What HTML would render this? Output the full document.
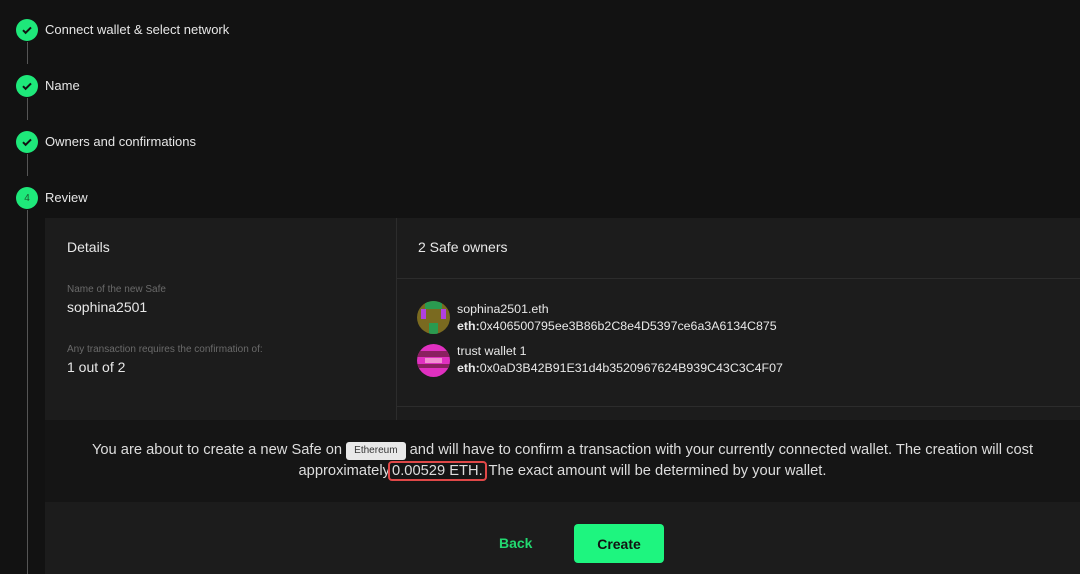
<!DOCTYPE html>
<html><head><style>
*{margin:0;padding:0;box-sizing:border-box}
body{width:1080px;height:574px;background:#121212;font-family:"Liberation Sans",sans-serif;color:#e8e8e8;position:relative;overflow:hidden}
.a{position:absolute}
.c{position:absolute;left:16px;width:22px;height:22px;border-radius:50%;background:#1ee87a;display:flex;align-items:center;justify-content:center}
.l{position:absolute;left:27px;width:1px;background:#555}
.st{position:absolute;left:45px;font-size:13px;color:#e6e6e6}
.sm{font-size:10px;color:#6a6a6a}
.av{position:absolute;left:417px;width:33px;height:33px;border-radius:50%;overflow:hidden}
.ow{font-size:12.4px}
</style></head><body>
<div class="l" style="top:42px;height:22px"></div>
<div class="l" style="top:98px;height:22px"></div>
<div class="l" style="top:154px;height:22px"></div>
<div class="l" style="top:210px;height:364px"></div>
<div class="c" style="top:19px"><svg width="12" height="12" viewBox="0 0 12 12"><path d="M2 6.2l2.6 2.6L10 3.4" stroke="#121212" stroke-width="2" fill="none"/></svg></div>
<div class="c" style="top:75px"><svg width="12" height="12" viewBox="0 0 12 12"><path d="M2 6.2l2.6 2.6L10 3.4" stroke="#121212" stroke-width="2" fill="none"/></svg></div>
<div class="c" style="top:131px"><svg width="12" height="12" viewBox="0 0 12 12"><path d="M2 6.2l2.6 2.6L10 3.4" stroke="#121212" stroke-width="2" fill="none"/></svg></div>
<div class="c" style="top:187px;font-size:10px;color:#1a5a30">4</div>
<div class="st" style="top:22px">Connect wallet &amp; select network</div>
<div class="st" style="top:78px">Name</div>
<div class="st" style="top:134px">Owners and confirmations</div>
<div class="st" style="top:190px">Review</div>

<div class="a" style="left:45px;top:218px;width:1035px;height:202px;background:#1c1c1c"></div>
<div class="a" style="left:396px;top:218px;width:1px;height:202px;background:#2c2c2c"></div>
<div class="a" style="left:397px;top:278px;width:683px;height:1px;background:#2c2c2c"></div>
<div class="a" style="left:397px;top:406px;width:683px;height:1px;background:#2c2c2c"></div>
<div class="a" style="left:67px;top:239px;font-size:14px">Details</div>
<div class="a sm" style="left:67px;top:284px">Name of the new Safe</div>
<div class="a" style="left:67px;top:299px;font-size:14px">sophina2501</div>
<div class="a sm" style="left:67px;top:344px">Any transaction requires the confirmation of:</div>
<div class="a" style="left:67px;top:359px;font-size:14px">1 out of 2</div>
<div class="a" style="left:418px;top:239px;font-size:14px">2 Safe owners</div>
<div class="av" style="top:301px;background:#7a6a20"><div class="a" style="left:8px;top:0;width:17px;height:8px;background:#2a9a50"></div><div class="a" style="left:4px;top:8px;width:5px;height:10px;background:#b040e0"></div><div class="a" style="left:24px;top:8px;width:5px;height:10px;background:#b040e0"></div><div class="a" style="left:12px;top:22px;width:9px;height:11px;background:#2a9a50"></div></div>
<div class="av" style="top:344px;background:#e030c0"><div class="a" style="left:0;top:7px;width:33px;height:6px;background:#8a2060"></div><div class="a" style="left:0;top:20px;width:33px;height:4px;background:#8a2060"></div><div class="a" style="left:8px;top:14px;width:17px;height:5px;background:#f090d0"></div></div>
<div class="a ow" style="left:457px;top:302px">sophina2501.eth</div>
<div class="a ow" style="left:457px;top:319px"><b>eth:</b>0x406500795ee3B86b2C8e4D5397ce6a3A6134C875</div>
<div class="a ow" style="left:457px;top:344px">trust wallet 1</div>
<div class="a ow" style="left:457px;top:361px"><b>eth:</b>0x0aD3B42B91E31d4b3520967624B939C43C3C4F07</div>

<div class="a" style="left:45px;top:420px;width:1035px;height:82px;background:#151515"></div>
<div class="a" style="left:45px;top:440px;width:1035px;text-align:center;font-size:14.7px;line-height:21px;color:#ddd">You are about to create a new Safe on <span style="display:inline-block;background:#e8e8e8;color:#333;font-size:10px;padding:2px 8px;border-radius:3px;line-height:14px;vertical-align:1px">Ethereum</span> and will have to confirm a transaction with your currently connected wallet. The creation will cost<br>approximately <span style="outline:2px solid #e04848;border-radius:2px;margin-left:-4px;padding:0 2px">0.00529 ETH.</span> The exact amount will be determined by your wallet.</div>
<div class="a" style="left:45px;top:502px;width:1035px;height:72px;background:#1c1c1c"></div>
<div class="a" style="left:499px;top:535px;font-size:14px;font-weight:bold;color:#22d870">Back</div>
<div class="a" style="left:574px;top:524px;width:90px;height:39px;background:#1ef57f;border-radius:4px;color:#121212;font-weight:bold;font-size:14px;display:flex;align-items:center;justify-content:center">Create</div>
</body></html>
